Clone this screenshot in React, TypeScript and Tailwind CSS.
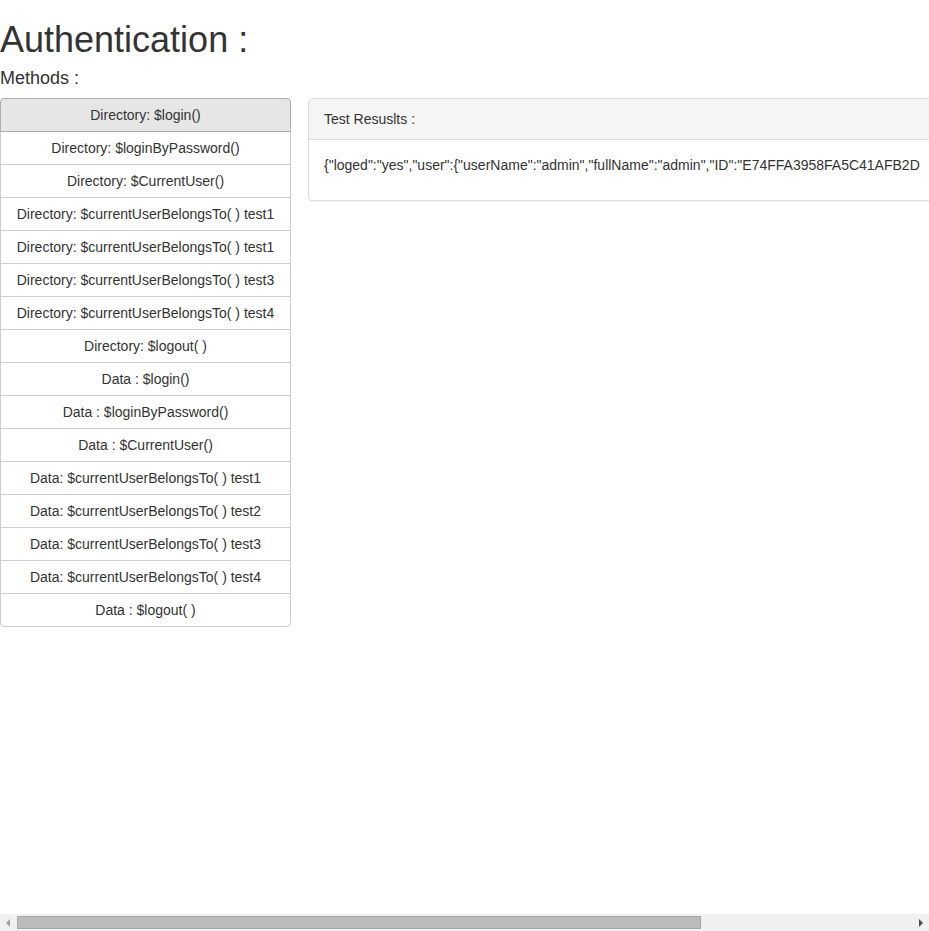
const methods = [
  'Directory: $login()',
  'Directory: $loginByPassword()',
  'Directory: $CurrentUser()',
  'Directory: $currentUserBelongsTo( ) test1',
  'Directory: $currentUserBelongsTo( ) test1',
  'Directory: $currentUserBelongsTo( ) test3',
  'Directory: $currentUserBelongsTo( ) test4',
  'Directory: $logout( )',
  'Data : $login()',
  'Data : $loginByPassword()',
  'Data : $CurrentUser()',
  'Data: $currentUserBelongsTo( ) test1',
  'Data: $currentUserBelongsTo( ) test2',
  'Data: $currentUserBelongsTo( ) test3',
  'Data: $currentUserBelongsTo( ) test4',
  'Data : $logout( )',
];

// only the part that shows before the page scrolls
const result =
  '{"loged":"yes","user":{"userName":"admin","fullName":"admin","ID":"E74FFA3958FA5C41AFB2D';

function ScrollBar() {
  return (
    <div className="flex h-[17px] shrink-0 items-center bg-[#f0f0f0]">
      <div className="flex h-full w-[17px] items-center justify-center">
        <svg width="5" height="8" viewBox="0 0 5 8">
          <path d="M4 0 L0 4 L4 8 Z" fill="#a3a3a3" />
        </svg>
      </div>
      <div className="h-[13px] w-[684px] border border-[#a6a6a6] bg-[#bcbcbc]" />
      <div className="flex-1" />
      <div className="flex h-full w-[17px] items-center justify-center">
        <svg width="5" height="8" viewBox="0 0 5 8">
          <path d="M1 0 L5 4 L1 8 Z" fill="#4d4d4d" />
        </svg>
      </div>
    </div>
  );
}

export default function App() {
  const active = 0;

  return (
    <div className="flex h-[931px] w-full flex-col overflow-hidden bg-white font-['Liberation_Sans',Arial,sans-serif] text-[#333]">
      <div className="flex-1 overflow-hidden">
        <h1 className="mt-5 text-[36px] leading-[40px]">Authentication :</h1>
        <h4 className="mt-2 mb-2.5 text-[18px] leading-[20px]">Methods :</h4>

        <div className="flex items-start gap-[17px]">
          <div className="flex w-[291px] shrink-0 flex-col">
            {methods.map((m, i) => (
              <button
                key={i}
                className={
                  'relative border px-3 py-1.5 text-center text-[14px] leading-5 ' +
                  (i > 0 ? '-mt-px ' : '') +
                  (i === 0 ? 'rounded-t-[4px] ' : '') +
                  (i === methods.length - 1 ? 'rounded-b-[4px] ' : '') +
                  (i === active
                    ? 'z-10 border-[#adadad] bg-[#e6e6e6]'
                    : 'border-[#ccc] bg-white')
                }
              >
                {m}
              </button>
            ))}
          </div>

          <div className="w-[909px] shrink-0 rounded-[4px] border border-[#ddd] bg-white shadow-[0_1px_1px_rgba(0,0,0,0.05)]">
            <div className="rounded-t-[3px] border-b border-[#ddd] bg-[#f5f5f5] px-[15px] py-2.5 text-[14px] leading-5">
              Test Resuslts :
            </div>
            <div className="p-[15px] text-[14px] leading-5">
              <p className="mb-2.5 whitespace-nowrap">{result}</p>
            </div>
          </div>
        </div>
      </div>
      <ScrollBar />
    </div>
  );
}
